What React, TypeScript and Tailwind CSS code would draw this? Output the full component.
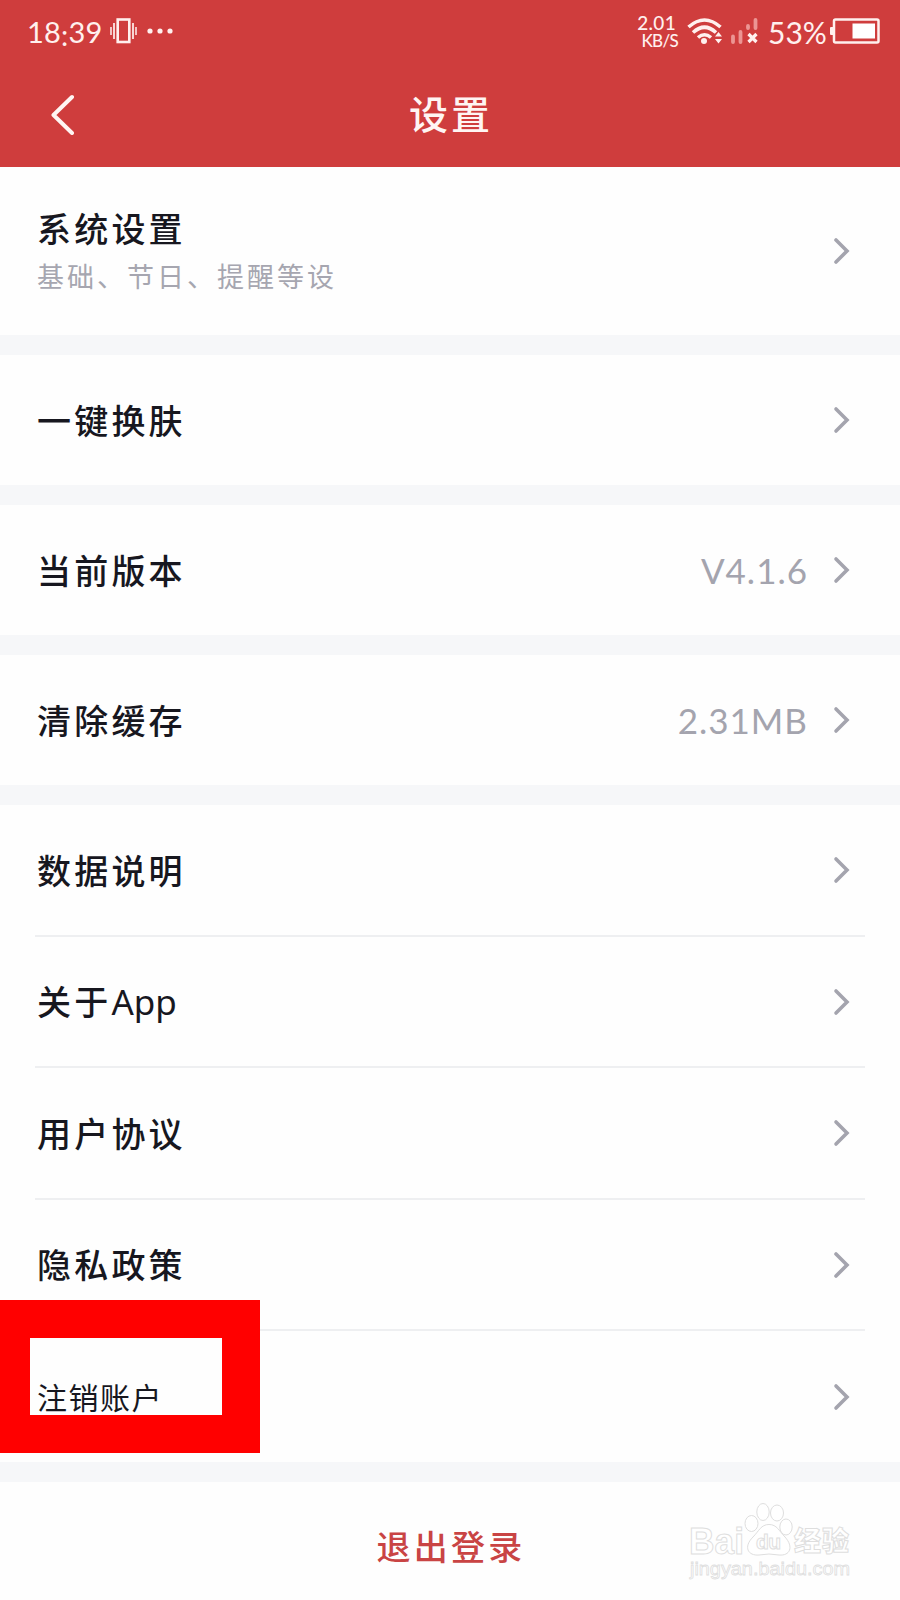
import React from 'react';

const cjk = "font-['Lato','Noto_Sans_CJK_SC',sans-serif]";

function StatusBar() {
  return (
    <div className="flex h-[62px] items-center justify-between pl-[27px] pr-[20px] text-[#fff0ee]">
      <div className="flex items-center">
        <span className="flex w-[83px] pt-[2px] text-[29px] leading-[36px] tracking-[0.2px]">18<span className="relative top-[3px]">:</span>39</span>
        <svg width="27" height="26" viewBox="0 0 27 26" fill="none" stroke="#fff0ee">
          <rect x="7.700" y="1.500" width="11.600" height="22.500" strokeWidth="2.600" />
          <path d="M4 5v16M23 5v16" strokeWidth="1.700" />
          <path d="M1 9v8M26 9v8" strokeWidth="1.500" />
        </svg>
        <svg className="ml-[10px]" width="26" height="6" viewBox="0 0 26 6" fill="#fff0ee">
          <circle cx="3" cy="3" r="2.600" />
          <circle cx="13" cy="3" r="2.600" />
          <circle cx="23" cy="3" r="2.600" />
        </svg>
      </div>
      <div className="flex items-center">
        <div className="flex w-[39px] flex-col items-end font-medium">
          <span className="pr-[2px] text-[19px] leading-[18px] tracking-[0.3px]">2.01</span>
          <span className="whitespace-nowrap text-[17px] leading-[17px] tracking-[-0.7px]">KB/S</span>
        </div>
        <svg className="ml-[9px]" width="36" height="27" viewBox="0 0 36 27" fill="none" stroke="#fff0ee">
          <path d="M1.500 9Q17.500 -5 33.500 9" strokeWidth="3.600" />
          <path d="M6 14.500Q17.500 4 29 14.500" strokeWidth="3.600" />
          <path d="M11 19.500Q17.500 14 24 19.500" strokeWidth="3.600" />
          <circle cx="17" cy="23" r="3" fill="#fff0ee" stroke="none" />
          <path d="M28 18.500L31.500 14L35 18.500ZM28 21L31.500 25.500L35 21Z" fill="#fff0ee" stroke="none" />
        </svg>
        <svg className="ml-[8px]" width="28" height="26" viewBox="0 0 28 26" fill="none">
          <path d="M2 18.500v5.500M9.500 14v10M17 8v2M24.500 2v8" stroke="#ec9593" strokeWidth="3.800" strokeLinecap="round" />
          <path d="M17.500 16l8 8M25.500 16l-8 8" stroke="#fff0ee" strokeWidth="3.200" />
        </svg>
        <span className="ml-[9px] w-[62px] whitespace-nowrap pt-[2px] text-[30px] leading-[36px]">53%</span>
        <svg width="50" height="26" viewBox="0 0 50 26" fill="none">
          <rect x="4" y="1.500" width="44.500" height="23" rx="1.500" stroke="#fff0ee" strokeWidth="2.500" />
          <rect x="0" y="9" width="4" height="8" rx="1" fill="#fff0ee" />
          <rect x="22.500" y="5.500" width="22.500" height="15" fill="#fff" />
        </svg>
      </div>
    </div>
  );
}

function Header() {
  return (
    <header className="h-[167px] bg-[#cf3d3d]">
      <StatusBar />
      <div className="grid h-[105px] grid-cols-[1fr_auto_1fr] items-center px-[50px] pb-[1px]">
        <svg width="26" height="42" viewBox="0 0 26 42" fill="none" stroke="#fff5f3" strokeWidth="4" strokeLinecap="round" strokeLinejoin="round">
          <path d="M22 4L3.500 22L22 40" />
        </svg>
        <h1 className="pl-[2px] text-[39px] font-medium leading-[56px] tracking-[3px] text-[#fff5f3]">设置</h1>
      </div>
    </header>
  );
}

function Chevron() {
  return (
    <svg className="ml-[25px] shrink-0" width="17" height="28" viewBox="0 0 17 28" fill="none" stroke="#a4a4ae" strokeWidth="3.600" strokeLinecap="round">
      <path d="M3 3L14 14L3 25" />
    </svg>
  );
}

interface RowProps {
  label: string;
  latin?: string;
  value?: string;
  hint?: string;
  height: string;
  divider?: boolean;
  highlighted?: boolean;
}

function Row({ label, latin, value, hint, height, divider, highlighted }: RowProps) {
  return (
    <div className={`relative px-[35px] ${height}`}>
      <div className={`flex h-full items-center justify-between pr-[15px] ${divider ? 'border-b-2 border-[#eeeff1]' : ''}`}>
        <div className={`pl-[2px] ${hint ? 'pt-[4px]' : highlighted ? '' : 'pt-[1px]'}`}>
          <div className={highlighted
            ? 'text-[30px] leading-[40px] tracking-[1.500px] text-[#17171f]'
            : 'text-[34px] font-medium leading-[48px] tracking-[3.200px] text-[#17171f]'}>
            {label}
            {latin && <span className="font-['Noto_Sans',sans-serif] text-[35px] font-normal leading-[40px] tracking-[0px]">{latin}</span>}
          </div>
          {hint && <div className="text-[27px] leading-[48px] tracking-[3px] text-[#a6a6b0]">{hint}</div>}
        </div>
        <div className="flex items-center">
          {value && <span className="text-[35px] leading-[44px] tracking-[1px] text-[#a4a4ae]">{value}</span>}
          <Chevron />
        </div>
      </div>
      {highlighted && <div className="absolute left-0 top-[-31px] h-[153px] w-[260px] border-x-[30px] border-y-[38px] border-r-[38px] border-[#ff0000]" />}
    </div>
  );
}

function Watermark() {
  return (
    <svg className="absolute right-[44px] top-[18px]" width="170" height="84" viewBox="0 0 170 84" fill="#fff" stroke="#dedede" strokeWidth="1">
      <text x="3" y="54" fontFamily="Liberation Sans" fontWeight="700" fontSize="36" textLength="55" lengthAdjust="spacingAndGlyphs">Bai</text>
      <ellipse cx="65.500" cy="23.500" rx="6.500" ry="8" />
      <ellipse cx="77" cy="12" rx="6.200" ry="8.500" />
      <ellipse cx="91" cy="13" rx="6.500" ry="8" />
      <ellipse cx="100" cy="27" rx="6.200" ry="8" />
      <path d="M83 24.500C75 24.500 73 31 67 37C57 47 62 56 73 55Q83 53 93 55C104 56 108 47 99 37C93 31 91 24.500 83 24.500Z" />
      <text x="70" y="49" fontFamily="Liberation Sans" fontWeight="700" fontSize="21" textLength="25">du</text>
      <text x="108" y="51" fontFamily="Noto Sans CJK SC" fontWeight="900" fontSize="27" textLength="55">经验</text>
      <text x="4" y="75" fontFamily="Liberation Sans" fontSize="19" strokeWidth="0.800" textLength="160" lengthAdjust="spacingAndGlyphs">jingyan.baidu.com</text>
    </svg>
  );
}

export default function App() {
  return (
    <main className={`flex h-[1600px] w-[900px] flex-col overflow-hidden bg-[#f6f7f9] ${cjk}`}>
      <Header />
      <div className="flex flex-1 flex-col gap-[20px]">
        <section className="bg-[#fefefe]"><Row label="系统设置" hint="基础、节日、提醒等设" height="h-[168px]" /></section>
        <section className="bg-[#fefefe]"><Row label="一键换肤" height="h-[130px]" /></section>
        <section className="bg-[#fefefe]"><Row label="当前版本" value="V4.1.6" height="h-[130px]" /></section>
        <section className="bg-[#fefefe]"><Row label="清除缓存" value="2.31MB" height="h-[130px]" /></section>
        <section className="bg-[#fefefe]">
          <Row label="数据说明" height="h-[132px]" divider />
          <Row label="关于" latin="App" height="h-[131px]" divider />
          <Row label="用户协议" height="h-[132px]" divider />
          <Row label="隐私政策" height="h-[131px]" divider />
          <Row label="注销账户" height="h-[131px]" highlighted />
        </section>
        <section className="relative flex flex-1 justify-center bg-[#fefefe] pt-[41px]">
          <button className="self-start pl-[2px] text-[34px] font-medium leading-[48px] tracking-[3.200px] text-[#c94444]">退出登录</button>
          <Watermark />
        </section>
      </div>
    </main>
  );
}
